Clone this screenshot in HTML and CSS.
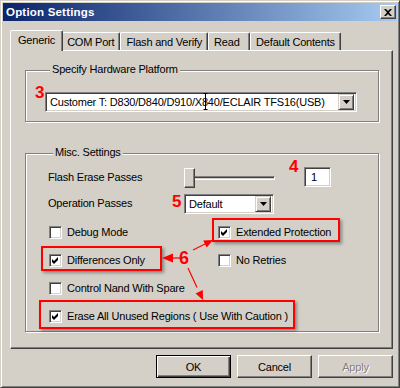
FILE: index.html
```html
<!DOCTYPE html>
<html lang="en">

<head>
  <meta charset="UTF-8">
  <title>Option Settings</title>
  <link rel="stylesheet" href="styles.css">
</head>

<body>
  <div class="window">
    <div class="titlebar">
      <span class="title">Option Settings</span>
      <span class="close-btn">
        <svg width="8" height="7" viewBox="0 0 8 7"><path d="M0 0h2l2 2 2-2h2L5 3.5 8 7H6L4 5 2 7H0l3-3.5z" fill="#000"/></svg>
      </span>
    </div>
    <div class="dialog">
      <div class="tabs">
        <div class="tab active">Generic</div>
        <div class="tab">COM Port</div>
        <div class="tab">Flash and Verify</div>
        <div class="tab tab-read">Read</div>
        <div class="tab">Default Contents</div>
      </div>
      <div class="panel">
        <div class="group group-platform">
          <div class="group-label">Specify Hardware Platform</div>
          <div class="combo combo-wide">
            <span class="combo-text">Customer T: D830/D840/D910/X840/ECLAIR TFS16(USB)</span>
            <span class="combo-btn"><svg width="7" height="4" viewBox="0 0 7 4"><path d="M0 0h7L3.5 4z" fill="#000"/></svg></span>
          </div>
        </div>
        <div class="group group-misc">
          <div class="group-label">Misc. Settings</div>
          <div class="field-row first">
            <span class="field-label">Flash Erase Passes</span>
            <div class="slider">
              <span class="slider-track"></span>
              <span class="slider-thumb"></span>
            </div>
            <div class="edit">1</div>
          </div>
          <div class="field-row">
            <span class="field-label">Operation Passes</span>
            <div class="combo combo-small">
              <span class="combo-text">Default</span>
              <span class="combo-btn"><svg width="7" height="4" viewBox="0 0 7 4"><path d="M0 0h7L3.5 4z" fill="#000"/></svg></span>
            </div>
          </div>
          <div class="check-grid">
            <label class="check-item"><span class="check"></span>Debug Mode</label>
            <label class="check-item"><span class="check on"><svg width="7" height="7" viewBox="0 0 7 7"><path d="M0 2l2 2 4-4v3L2 7 0 5z" fill="#000"/></svg></span>Extended Protection</label>
            <label class="check-item"><span class="check on"><svg width="7" height="7" viewBox="0 0 7 7"><path d="M0 2l2 2 4-4v3L2 7 0 5z" fill="#000"/></svg></span>Differences Only</label>
            <label class="check-item"><span class="check"></span>No Retries</label>
            <label class="check-item"><span class="check"></span>Control Nand With Spare</label>
            <span></span>
            <label class="check-item wide"><span class="check on"><svg width="7" height="7" viewBox="0 0 7 7"><path d="M0 2l2 2 4-4v3L2 7 0 5z" fill="#000"/></svg></span>Erase All Unused Regions ( Use With Caution )</label>
          </div>
        </div>
      </div>
      <div class="buttons">
        <button class="btn default">OK</button>
        <button class="btn">Cancel</button>
        <button class="btn disabled">Apply</button>
      </div>
    </div>
  </div>

  <!-- red callouts drawn over the dialog -->
  <div class="annotations">
    <span class="num num-3">3</span>
    <span class="num num-4">4</span>
    <span class="num num-5">5</span>
    <span class="num num-6">6</span>
    <span class="mark mark-ext"></span>
    <span class="mark mark-diff"></span>
    <span class="mark mark-erase"></span>
    <svg class="arrows" width="400" height="388" viewBox="0 0 400 388">
      <path d="M203.5 93.5h4M205.5 93.5v16M203.5 109.5h4" stroke="#000" stroke-width="1" fill="none"/>
      <g stroke="#f00" stroke-width="1.2" fill="#f00">
        <path d="M172 258h8"/>
        <path d="M162 258l11-4.5v9z" stroke="none"/>
        <path d="M193 250l12-6"/>
        <path d="M213 240l-6.3 7.6-3.5-7.2z" stroke="none"/>
        <path d="M188 268l9 19.5"/>
        <path d="M203 300l-0.2-9.9-7.2 3.4z" stroke="none"/>
      </g>
    </svg>
  </div>
</body>

</html>
```

FILE: styles.css
```css
* {
  box-sizing: border-box;
}

body {
  margin: 0;
  position: relative;
  background: #d4d0c8;
  font-family: "Liberation Sans", Arial, sans-serif;
  font-size: 11px;
  letter-spacing: -0.2px;
  color: #000;
}

.window {
  width: 400px;
  height: 388px;
  padding: 2px;
  border: 1px solid;
  border-color: #d4d0c8 #404040 #404040 #d4d0c8;
  box-shadow: inset 1px 1px 0 #fff, inset -1px -1px 0 #808080;
  background: #d4d0c8;
}

.titlebar {
  height: 18px;
  display: flex;
  align-items: center;
  justify-content: space-between;
  padding: 0 1px 0 3px;
  background: linear-gradient(to right, #0a246a, #a6caf0);
}

.title {
  color: #fff;
  font-weight: bold;
  font-size: 11.5px;
  letter-spacing: 0.2px;
}

.close-btn {
  width: 16px;
  height: 14px;
  display: flex;
  align-items: center;
  justify-content: center;
  background: #d4d0c8;
  border: 1px solid;
  border-color: #fff #404040 #404040 #fff;
  box-shadow: inset -1px -1px 0 #808080;
}

.dialog {
  padding: 9px 4px 0 7px;
}

.tabs {
  display: flex;
  align-items: flex-end;
  padding-left: 2px;
  position: relative;
  z-index: 1;
}

.tab {
  height: 18px;
  padding: 2px 5px 0;
  line-height: 15px;
  border: 1px solid;
  border-bottom: none;
  border-color: #fff #404040 transparent #fff;
  border-radius: 2px 2px 0 0;
  box-shadow: inset -1px 0 0 #808080;
  white-space: nowrap;
}

.tab-read {
  min-width: 42px;
}

.tab.active {
  height: 21px;
  padding: 2px 7px 3px;
  margin: 0 -2px -1px;
  background: #d4d0c8;
  position: relative;
  z-index: 2;
}

.panel {
  height: 299px;
  padding: 19px 13px 0 14px;
  border: 1px solid;
  border-color: #fff #404040 #404040 #fff;
  box-shadow: inset -1px -1px 0 #808080;
}

.group {
  border: 1px solid #808080;
  box-shadow: inset 1px 1px 0 #fff, 1px 1px 0 #fff;
}

.group-label {
  width: fit-content;
  margin: -8px 0 0 5px;
  padding: 0 2px;
  line-height: 13px;
  background: #d4d0c8;
}

.group-platform {
  padding: 0 21px 9px 19px;
}

.group-platform .combo {
  margin-top: 16px;
}

.group-misc {
  margin-top: 31px;
  padding: 0 0 8px 22px;
}

.combo,
.edit {
  display: flex;
  align-items: center;
  background: #fff;
  border: 1px solid;
  border-color: #808080 #fff #fff #808080;
  box-shadow: inset 1px 1px 0 #404040, inset -1px -1px 0 #d4d0c8;
}

.combo {
  height: 20px;
  padding: 2px 2px 2px 1px;
}

.combo-text {
  flex: 1;
  padding-left: 3px;
  line-height: 16px;
  white-space: nowrap;
}

.combo-btn {
  width: 16px;
  height: 16px;
  display: flex;
  align-items: center;
  justify-content: center;
  background: #d4d0c8;
  border: 1px solid;
  border-color: #d4d0c8 #404040 #404040 #d4d0c8;
  box-shadow: inset 1px 1px 0 #fff, inset -1px -1px 0 #808080;
}

.combo-small {
  flex: none;
  width: 90px;
}

.field-row {
  display: flex;
  align-items: center;
  height: 21px;
  margin-top: 5px;
}

.field-row.first {
  margin-top: 8px;
}

.field-label {
  flex: none;
  width: 136px;
  line-height: 13px;
}

.slider {
  flex: none;
  position: relative;
  width: 91px;
  height: 21px;
}

.slider-track {
  display: block;
  height: 4px;
  margin-top: 9px;
  border: 1px solid;
  border-color: #808080 #fff #fff #808080;
  box-shadow: inset 1px 1px 0 #404040;
}

.slider-thumb {
  position: absolute;
  left: 0;
  top: 1px;
  width: 11px;
  height: 20px;
  background: #d4d0c8;
  border: 1px solid;
  border-color: #fff #404040 #404040 #fff;
  box-shadow: inset -1px -1px 0 #808080;
}

.edit {
  flex: none;
  width: 27px;
  height: 20px;
  margin-left: 29px;
  padding-left: 6px;
  align-self: flex-start;
}

.check-grid {
  display: grid;
  grid-template-columns: 169px 1fr;
  row-gap: 15px;
  margin: 12px 0 0 1px;
}

.check-item {
  display: flex;
  align-items: center;
  gap: 5px;
  height: 13px;
  line-height: 13px;
  white-space: nowrap;
}

.check-item.wide {
  grid-column: 1 / 3;
}

.check {
  flex: none;
  width: 13px;
  height: 13px;
  display: flex;
  align-items: center;
  justify-content: center;
  background: #fff;
  border: 1px solid;
  border-color: #808080 #fff #fff #808080;
  box-shadow: inset 1px 1px 0 #404040, inset -1px -1px 0 #d4d0c8;
}

.buttons {
  display: flex;
  justify-content: flex-end;
  gap: 6px;
  margin-top: 6px;
}

.btn {
  width: 75px;
  height: 23px;
  padding: 0;
  font-family: inherit;
  font-size: 11px;
  letter-spacing: inherit;
  color: #000;
  background: #d4d0c8;
  border: 1px solid;
  border-color: #fff #404040 #404040 #fff;
  box-shadow: inset -1px -1px 0 #808080;
}

.btn.default {
  border-color: #000;
  box-shadow: inset 1px 1px 0 #fff, inset -1px -1px 0 #404040, inset -2px -2px 0 #808080;
}

.btn.disabled {
  color: #808080;
  text-shadow: 1px 1px 0 #fff;
}

.annotations {
  position: absolute;
  left: 0;
  top: 0;
  width: 400px;
  height: 388px;
  pointer-events: none;
  letter-spacing: 0;
}

.arrows {
  position: absolute;
  left: 0;
  top: 0;
}

.num {
  position: absolute;
  color: #f00;
  font-weight: bold;
  font-size: 17px;
  line-height: 17px;
}

.num-3 { left: 35px; top: 84px; }
.num-4 { left: 289px; top: 158px; }
.num-5 { left: 172px; top: 193px; }
.num-6 { left: 179px; top: 250px; font-size: 18px; }

.mark {
  position: absolute;
  border: 2px solid #f00;
  box-shadow: 2px 2px 3px rgba(0, 0, 0, 0.35);
}

.mark-ext { left: 212px; top: 218px; width: 128px; height: 24px; }
.mark-diff { left: 41px; top: 246px; width: 121px; height: 25px; }
.mark-erase { left: 39px; top: 300px; width: 256px; height: 29px; }
```
